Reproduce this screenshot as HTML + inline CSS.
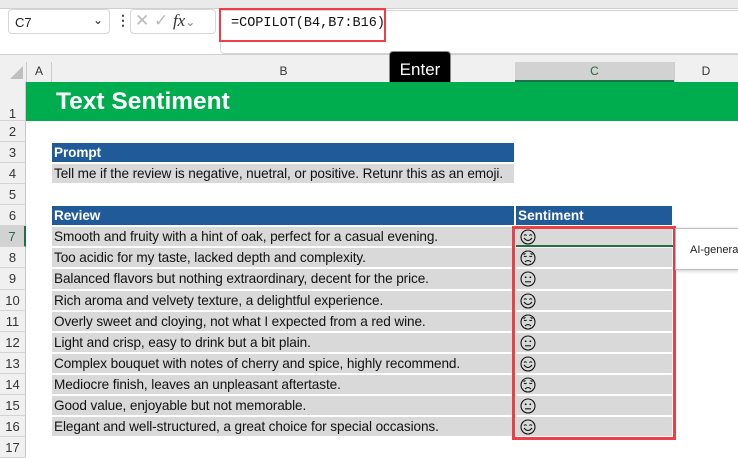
<!DOCTYPE html>
<html><head><meta charset="utf-8"><style>
*{margin:0;padding:0;box-sizing:border-box}
body{width:738px;height:456px;overflow:hidden;background:#fff;font-family:"Liberation Sans",sans-serif;position:relative}
.a{position:absolute}
.rh{position:absolute;left:0;width:26px;background:#f0f0f0;border-bottom:1px solid #d4d4d4;border-right:1px solid #c8c8c8;font-size:13px;color:#333;text-align:center}
.cell{position:absolute;left:52px;width:462px;background:#d9d9d9;font-size:13.6px;color:#111;padding-left:2px;white-space:nowrap;overflow:hidden;letter-spacing:-0.1px}
.hdr{background:#215a98;color:#fff;font-weight:bold}
.c{position:absolute;left:516px;width:156px;background:#d9d9d9}
svg.e{position:absolute;left:4px;top:2px}
</style></head><body>
<div class="a" style="left:0;top:0;width:738px;height:9px;background:#eaeaea;border-bottom:1px solid #d0d0d0"></div>
<div class="a" style="left:0;top:54px;width:738px;height:28px;background:#f0f0f0;border-top:1px solid #cfcfcf"></div>
<div class="a" style="left:8px;top:9px;width:102px;height:25px;border:1px solid #d6d6d6;border-radius:4px;background:#fff;font-size:13px;padding:5px 6px;color:#222">C7<span style="position:absolute;right:6px;top:3px;font-size:12px">&#8964;</span></div>
<div class="a" style="left:116px;top:12px;font-size:14px;color:#444;font-weight:bold">&#8942;</div>
<div class="a" style="left:130px;top:9px;width:86px;height:25px;border:1px solid #d6d6d6;border-radius:4px;background:#fff;color:#bbb;font-size:17px;padding:1px 4px;white-space:nowrap">✕ ✓ <i style="font-family:'Liberation Serif',serif;color:#333;font-size:17px">fx</i><span style="font-size:12px;color:#888">&#8964;</span></div>
<div class="a" style="left:220px;top:10px;width:518px;height:44px;border:1px solid #d6d6d6;border-right:none;border-radius:4px 0 0 4px;background:#fff"></div>
<div class="a" style="left:219px;top:8px;width:167px;height:34px;border:2px solid #ef3f46;font-family:'Liberation Mono',monospace;font-size:13.5px;padding:6px 0 0 10px;color:#111">=COPILOT(B4,B7:B16)</div>
<div class="a" style="left:26px;top:62px;width:1px;height:20px;background:#ccc"></div>
<div class="a" style="left:10px;top:66px;width:0;height:0;border-left:13px solid transparent;border-bottom:13px solid #bfbfbf"></div>
<div class="a" style="left:27px;top:64px;width:24px;font-size:12px;text-align:center;color:#333">A</div>
<div class="a" style="left:51px;top:62px;width:1px;height:20px;background:#ccc"></div>
<div class="a" style="left:52px;top:64px;width:463px;font-size:12px;text-align:center;color:#333">B</div>
<div class="a" style="left:515px;top:62px;width:159px;height:20px;background:#d2d2d2;border-bottom:2px solid #1e7145;font-size:12px;text-align:center;padding-top:2px;color:#1e6b44">C</div>
<div class="a" style="left:674px;top:64px;width:64px;font-size:12px;text-align:center;color:#333">D</div>
<div class="a" style="left:674px;top:62px;width:1px;height:20px;background:#ccc"></div>
<div class="a" style="left:389px;top:51px;width:62px;height:38px;background:#000;border:1px solid #888;border-radius:4px;color:#fff;font-size:17px;text-align:center;padding-top:8px">Enter</div>
<div class="a" style="left:26px;top:82px;width:712px;height:39px;background:#00ad4e"></div>
<div class="a" style="left:56px;top:88px;color:#fff;font-weight:bold;font-size:24.5px">Text Sentiment</div>
<div class="rh" style="top:82px;height:39px;padding-top:24px">1</div>
<div class="rh" style="top:121px;height:21px;padding-top:3px">2</div>
<div class="rh" style="top:142px;height:21px;padding-top:3px">3</div>
<div class="rh" style="top:163px;height:21px;padding-top:3px">4</div>
<div class="rh" style="top:184px;height:21px;padding-top:3px">5</div>
<div class="rh" style="top:205px;height:21px;padding-top:3px">6</div>
<div class="rh" style="top:226px;height:21px;padding-top:3px;background:#d2d2d2;border-right:2px solid #1e7145;color:#1e6b44">7</div>
<div class="rh" style="top:247px;height:21px;padding-top:3px">8</div>
<div class="rh" style="top:268px;height:22px;padding-top:3px">9</div>
<div class="rh" style="top:290px;height:21px;padding-top:3px">10</div>
<div class="rh" style="top:311px;height:21px;padding-top:3px">11</div>
<div class="rh" style="top:332px;height:21px;padding-top:3px">12</div>
<div class="rh" style="top:353px;height:21px;padding-top:3px">13</div>
<div class="rh" style="top:374px;height:21px;padding-top:3px">14</div>
<div class="rh" style="top:395px;height:21px;padding-top:3px">15</div>
<div class="rh" style="top:416px;height:21px;padding-top:3px">16</div>
<div class="rh" style="top:437px;height:21px;padding-top:3px">17</div>
<div class="cell hdr" style="top:143px;height:19px;padding-top:2px">Prompt</div>
<div class="cell" style="top:164px;height:19px;padding-top:2px">Tell me if the review is negative, nuetral, or positive. Retunr this as an emoji.</div>
<div class="cell hdr" style="top:206px;height:19px;padding-top:2px">Review</div>
<div class="a hdr" style="left:516px;top:206px;width:156px;height:19px;padding:2px 0 0 2px;font-size:13.6px">Sentiment</div>
<div class="cell" style="top:227px;height:19px;padding-top:2px">Smooth and fruity with a hint of oak, perfect for a casual evening.</div>
<div class="cell" style="top:248px;height:19px;padding-top:2px">Too acidic for my taste, lacked depth and complexity.</div>
<div class="cell" style="top:269px;height:20px;padding-top:2px">Balanced flavors but nothing extraordinary, decent for the price.</div>
<div class="cell" style="top:291px;height:19px;padding-top:2px">Rich aroma and velvety texture, a delightful experience.</div>
<div class="cell" style="top:312px;height:19px;padding-top:2px">Overly sweet and cloying, not what I expected from a red wine.</div>
<div class="cell" style="top:333px;height:19px;padding-top:2px">Light and crisp, easy to drink but a bit plain.</div>
<div class="cell" style="top:354px;height:19px;padding-top:2px">Complex bouquet with notes of cherry and spice, highly recommend.</div>
<div class="cell" style="top:375px;height:19px;padding-top:2px">Mediocre finish, leaves an unpleasant aftertaste.</div>
<div class="cell" style="top:396px;height:19px;padding-top:2px">Good value, enjoyable but not memorable.</div>
<div class="cell" style="top:417px;height:19px;padding-top:2px">Elegant and well-structured, a great choice for special occasions.</div>
<svg width="0" height="0" style="position:absolute"><defs>
<g id="h"><circle cx="8" cy="8" r="7" fill="none" stroke="#111" stroke-width="1.1"/><path d="M4 6.5q1.3-1.5 2.6 0M9.4 6.5q1.3-1.5 2.6 0M4 9q4 5 8 0" fill="none" stroke="#111" stroke-width="1.1"/></g>
<g id="s"><circle cx="8" cy="8" r="7" fill="none" stroke="#111" stroke-width="1.1"/><path d="M4 6q1.3 1.3 2.6 0M9.4 6q1.3 1.3 2.6 0M5 12q3-3 6 0M3.5 4.5l2-1M12.5 4.5l-2-1" fill="none" stroke="#111" stroke-width="1"/></g>
<g id="n"><circle cx="8" cy="8" r="7" fill="none" stroke="#111" stroke-width="1.1"/><circle cx="5.7" cy="6.3" r="0.9" fill="#111"/><circle cx="10.3" cy="6.3" r="0.9" fill="#111"/><path d="M5 10.8h6" stroke="#111" stroke-width="1.1"/></g>
</defs></svg>
<div class="c" style="top:227px;height:19px"><svg class="e" width="16" height="16"><use href="#h"/></svg></div>
<div class="a" style="left:516px;top:245px;width:157px;height:2px;background:#1e7145"></div>
<div class="c" style="top:248px;height:19px"><svg class="e" width="16" height="16"><use href="#s"/></svg></div>
<div class="c" style="top:269px;height:20px"><svg class="e" width="16" height="16"><use href="#n"/></svg></div>
<div class="c" style="top:291px;height:19px"><svg class="e" width="16" height="16"><use href="#h"/></svg></div>
<div class="c" style="top:312px;height:19px"><svg class="e" width="16" height="16"><use href="#s"/></svg></div>
<div class="c" style="top:333px;height:19px"><svg class="e" width="16" height="16"><use href="#n"/></svg></div>
<div class="c" style="top:354px;height:19px"><svg class="e" width="16" height="16"><use href="#h"/></svg></div>
<div class="c" style="top:375px;height:19px"><svg class="e" width="16" height="16"><use href="#s"/></svg></div>
<div class="c" style="top:396px;height:19px"><svg class="e" width="16" height="16"><use href="#n"/></svg></div>
<div class="c" style="top:417px;height:19px"><svg class="e" width="16" height="16"><use href="#h"/></svg></div>
<div class="a" style="left:512px;top:226px;width:164px;height:214px;border:3px solid #ef3f46"></div>
<div class="a" style="left:675px;top:228px;width:70px;height:42px;background:#fff;border:1px solid #bbb;box-shadow:0 1px 4px rgba(0,0,0,.2);font-size:11px;color:#222;padding:15px 0 0 14px;white-space:nowrap">AI-generated</div>
</body></html>
